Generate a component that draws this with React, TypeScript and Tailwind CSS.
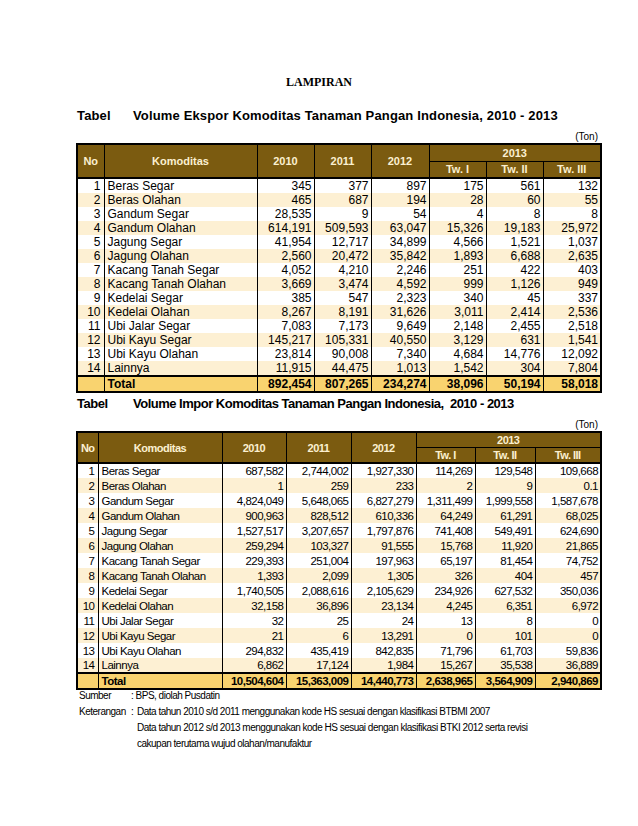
const narrow = "font-['Liberation_Sans',Arial,sans-serif] tracking-[-0.5px]";

type Row = [string, string, string, string, string, string, string];

const ekspor: Row[] = [
  ["Beras Segar", "345", "377", "897", "175", "561", "132"],
  ["Beras Olahan", "465", "687", "194", "28", "60", "55"],
  ["Gandum Segar", "28,535", "9", "54", "4", "8", "8"],
  ["Gandum Olahan", "614,191", "509,593", "63,047", "15,326", "19,183", "25,972"],
  ["Jagung Segar", "41,954", "12,717", "34,899", "4,566", "1,521", "1,037"],
  ["Jagung Olahan", "2,560", "20,472", "35,842", "1,893", "6,688", "2,635"],
  ["Kacang Tanah Segar", "4,052", "4,210", "2,246", "251", "422", "403"],
  ["Kacang Tanah Olahan", "3,669", "3,474", "4,592", "999", "1,126", "949"],
  ["Kedelai Segar", "385", "547", "2,323", "340", "45", "337"],
  ["Kedelai Olahan", "8,267", "8,191", "31,626", "3,011", "2,414", "2,536"],
  ["Ubi Jalar Segar", "7,083", "7,173", "9,649", "2,148", "2,455", "2,518"],
  ["Ubi Kayu Segar", "145,217", "105,331", "40,550", "3,129", "631", "1,541"],
  ["Ubi Kayu Olahan", "23,814", "90,008", "7,340", "4,684", "14,776", "12,092"],
  ["Lainnya", "11,915", "44,475", "1,013", "1,542", "304", "7,804"],
];
const eksporTotal: Row = ["Total", "892,454", "807,265", "234,274", "38,096", "50,194", "58,018"];

const impor: Row[] = [
  ["Beras Segar", "687,582", "2,744,002", "1,927,330", "114,269", "129,548", "109,668"],
  ["Beras Olahan", "1", "259", "233", "2", "9", "0.1"],
  ["Gandum Segar", "4,824,049", "5,648,065", "6,827,279", "1,311,499", "1,999,558", "1,587,678"],
  ["Gandum Olahan", "900,963", "828,512", "610,336", "64,249", "61,291", "68,025"],
  ["Jagung Segar", "1,527,517", "3,207,657", "1,797,876", "741,408", "549,491", "624,690"],
  ["Jagung Olahan", "259,294", "103,327", "91,555", "15,768", "11,920", "21,865"],
  ["Kacang Tanah Segar", "229,393", "251,004", "197,963", "65,197", "81,454", "74,752"],
  ["Kacang Tanah Olahan", "1,393", "2,099", "1,305", "326", "404", "457"],
  ["Kedelai Segar", "1,740,505", "2,088,616", "2,105,629", "234,926", "627,532", "350,036"],
  ["Kedelai Olahan", "32,158", "36,896", "23,134", "4,245", "6,351", "6,972"],
  ["Ubi Jalar Segar", "32", "25", "24", "13", "8", "0"],
  ["Ubi Kayu Segar", "21", "6", "13,291", "0", "101", "0"],
  ["Ubi Kayu Olahan", "294,832", "435,419", "842,835", "71,796", "61,703", "59,836"],
  ["Lainnya", "6,862", "17,124", "1,984", "15,267", "35,538", "36,889"],
];
const imporTotal: Row = ["Total", "10,504,604", "15,363,009", "14,440,773", "2,638,965", "3,564,909", "2,940,869"];

type TableProps = {
  rows: Row[];
  total: Row;
  cols: string[];
  font: string;
  headRow: string;
  bodyRow: string;
};

function DataTable({ rows, total, cols, font, headRow, bodyRow }: TableProps) {
  const th = "border border-black p-0 text-center font-bold";
  return (
    <table className={`w-[524px] table-fixed border-collapse border-2 border-black ${font}`}>
      <colgroup>
        {cols.map((c, i) => (
          <col key={i} className={c} />
        ))}
      </colgroup>
      <thead className="bg-[#7b5b10] text-[#fbf0d0]">
        <tr className={headRow}>
          <th rowSpan={2} className={`${th} border-b-2`}>No</th>
          <th rowSpan={2} className={`${th} border-b-2`}>Komoditas</th>
          <th rowSpan={2} className={`${th} border-b-2`}>2010</th>
          <th rowSpan={2} className={`${th} border-b-2`}>2011</th>
          <th rowSpan={2} className={`${th} border-b-2`}>2012</th>
          <th colSpan={3} className={th}>2013</th>
        </tr>
        <tr className={headRow}>
          <th className={`${th} border-b-2`}>Tw. I</th>
          <th className={`${th} border-b-2`}>Tw. II</th>
          <th className={`${th} border-b-2`}>Tw. III</th>
        </tr>
      </thead>
      <tbody>
        {rows.map((r, i) => (
          <tr key={r[0]} className={`${bodyRow} ${i % 2 ? "bg-[#fdf0d3]" : "bg-white"}`}>
            <td className="border-x border-black p-0 pr-[3px] text-right">{i + 1}</td>
            <td className="border-x border-black p-0 pl-[3px] whitespace-nowrap">{r[0]}</td>
            {r.slice(1).map((v, j) => (
              <td key={j} className="border-x border-black p-0 pr-[2px] text-right">
                {v}
              </td>
            ))}
          </tr>
        ))}
        <tr className={`${bodyRow} bg-[#f9d36f] font-bold`}>
          <td className="border border-t-2 border-black p-0"></td>
          <td className="border border-t-2 border-black p-0 pl-[3px]">{total[0]}</td>
          {total.slice(1).map((v, j) => (
            <td key={j} className="border border-t-2 border-black p-0 pr-[2px] text-right">
              {v}
            </td>
          ))}
        </tr>
      </tbody>
    </table>
  );
}

export default function App() {
  return (
    <div className="w-[638px] h-[826px] bg-white text-black font-['Liberation_Sans',Arial,sans-serif]">
      <div className="pt-[75px] text-center font-['Liberation_Serif',serif] font-bold text-[12px] leading-[14px]">
        LAMPIRAN
      </div>

      <div className="ml-[77px] mt-[19px] flex text-[13px] tracking-[0.15px] font-bold leading-[16px]">
        <span className="w-[56px]">Tabel</span>
        <span>Volume Ekspor Komoditas Tanaman Pangan Indonesia, 2010 - 2013</span>
      </div>
      <div className="ml-[76px] mt-[7px] w-[522px] text-right text-[10px] leading-[12px]">(Ton)</div>
      <div className="ml-[76px]">
        <DataTable
          rows={ekspor}
          total={eksporTotal}
          cols={["w-[27px]", "w-[153px]", "w-[57px]", "w-[57px]", "w-[58px]", "w-[57px]", "w-[57px]", "w-[58px]"]}
          font="text-[12px] leading-[14px]"
          headRow="h-[17px] text-[11px]"
          bodyRow="h-[14px]"
        />
      </div>

      <div className="ml-[77px] mt-[3px] flex text-[13px] font-bold leading-[16px] tracking-[-0.5px]">
        <span className="w-[56px]">Tabel</span>
        <span className="whitespace-pre">Volume Impor Komoditas Tanaman Pangan Indonesia,  2010 - 2013</span>
      </div>
      <div className="ml-[76px] mt-[7px] w-[522px] text-right text-[10px] leading-[12px]">(Ton)</div>
      <div className="ml-[76px]">
        <DataTable
          rows={impor}
          total={imporTotal}
          cols={["w-[21px]", "w-[124px]", "w-[64px]", "w-[65px]", "w-[65px]", "w-[59px]", "w-[60px]", "w-[66px]"]}
          font={`text-[11.5px] leading-[14px] ${narrow}`}
          headRow="h-[15px] text-[11px]"
          bodyRow="h-[15px]"
        />
      </div>

      <div className="ml-[79px] -mt-[2px] text-[10px] leading-[16px] tracking-[-0.5px]">
        <div className="flex">
          <span className="w-[52px]">Sumber</span>
          <span>: BPS, diolah Pusdatin</span>
        </div>
        <div className="flex">
          <span className="w-[52px]">Keterangan</span>
          <span className="w-[6px]">:</span>
          <div>
            <div>Data tahun 2010 s/d 2011 menggunakan kode HS sesuai dengan klasifikasi BTBMI 2007</div>
            <div>Data tahun 2012 s/d 2013 menggunakan kode HS sesuai dengan klasifikasi BTKI 2012 serta revisi</div>
            <div>cakupan terutama wujud olahan/manufaktur</div>
          </div>
        </div>
      </div>
    </div>
  );
}
